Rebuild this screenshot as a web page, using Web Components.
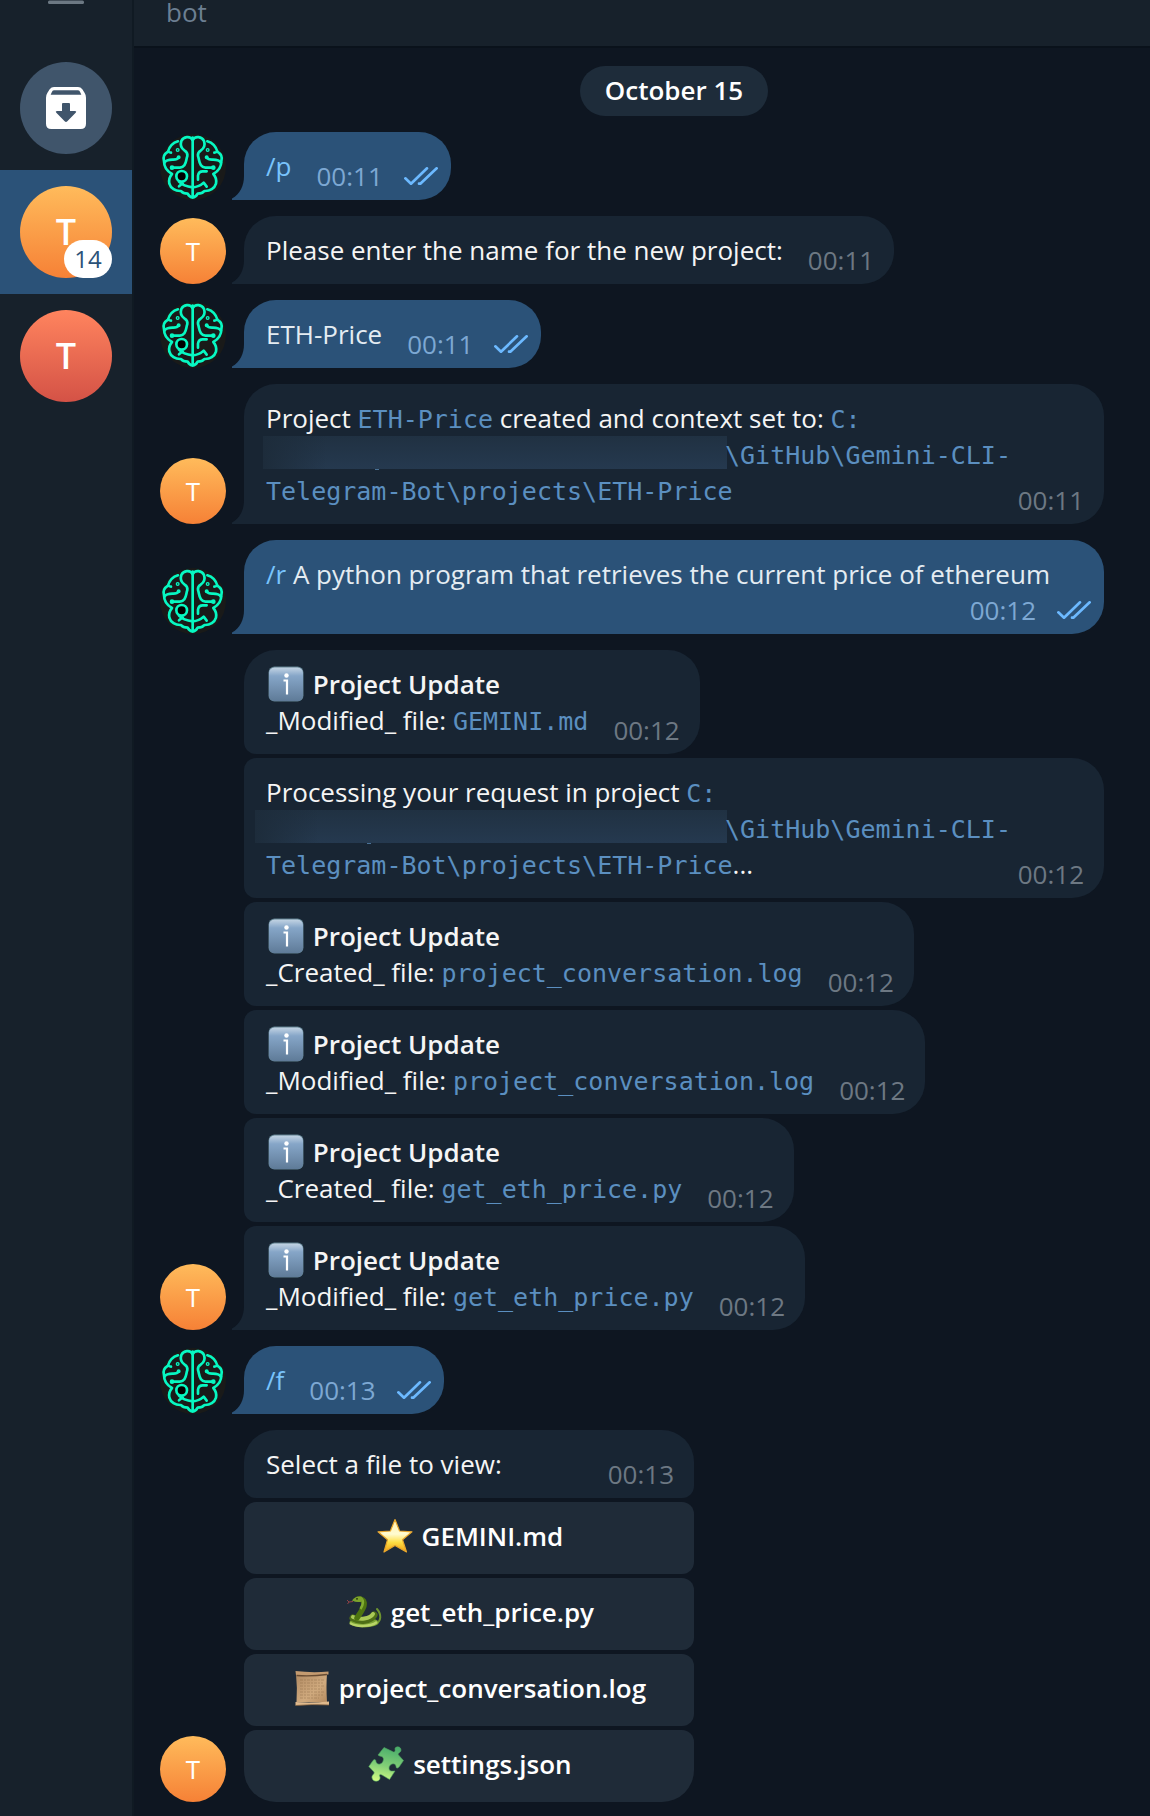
<!DOCTYPE html>
<html lang="en">
<head>
<meta charset="utf-8">
<title>Chat</title>
<style>
  html { background: #0e1621; }
  body { margin: 0; font: 26px/36px "Open Sans", "Noto Sans", sans-serif; color: #f5f5f5; }
  code { font-family: "DejaVu Sans Mono", monospace; font-size: 25px; line-height: 0; color: #5b8fc0; white-space: nowrap; }
  b { font-weight: 600; }
  chat-bubble a { color: #79c4fc; text-decoration: none; }
</style>
</head>
<body>
<app-shell>
  <side-bar slot="side">
    <side-chat label="Archived chats" kind="archive"></side-chat>
    <side-chat label="T" kind="orange" badge="14" selected></side-chat>
    <side-chat label="T" kind="red"></side-chat>
  </side-bar>
  <chat-header slot="head">bot</chat-header>

  <date-pill>October 15</date-pill>

  <message-group who="me">
    <chat-bubble out tail time="00:11"><a href="#p">/p</a></chat-bubble>
  </message-group>
  <message-group who="bot">
    <chat-bubble tail time="00:11">Please enter the name for the new project:</chat-bubble>
  </message-group>
  <message-group who="me">
    <chat-bubble out tail time="00:11">ETH-Price</chat-bubble>
  </message-group>
  <message-group who="bot">
    <chat-bubble tail wide time="00:11">Project <code>ETH-Price</code> created and context set to: <code>C:</code><br><redacted-text></redacted-text><code>\GitHub\Gemini-CLI-</code><br><code>Telegram-Bot\projects\ETH-Price</code></chat-bubble>
  </message-group>
  <message-group who="me">
    <chat-bubble out tail time="00:12"><a href="#r">/r</a> A python program that retrieves the current price of ethereum</chat-bubble>
  </message-group>
  <message-group who="bot">
    <chat-bubble joined-below time="00:12"><emoji-icon name="info"></emoji-icon> <b>Project Update</b><br>_Modified_ file: <code>GEMINI.md</code></chat-bubble>
    <chat-bubble joined-above joined-below wide time="00:12">Processing your request in project <code>C:</code><br><redacted-text long></redacted-text><code>\GitHub\Gemini-CLI-</code><br><code>Telegram-Bot\projects\ETH-Price</code>...</chat-bubble>
    <chat-bubble joined-above joined-below time="00:12"><emoji-icon name="info"></emoji-icon> <b>Project Update</b><br>_Created_ file: <code>project_conversation.log</code></chat-bubble>
    <chat-bubble joined-above joined-below time="00:12"><emoji-icon name="info"></emoji-icon> <b>Project Update</b><br>_Modified_ file: <code>project_conversation.log</code></chat-bubble>
    <chat-bubble joined-above joined-below time="00:12"><emoji-icon name="info"></emoji-icon> <b>Project Update</b><br>_Created_ file: <code>get_eth_price.py</code></chat-bubble>
    <chat-bubble joined-above tail time="00:12"><emoji-icon name="info"></emoji-icon> <b>Project Update</b><br>_Modified_ file: <code>get_eth_price.py</code></chat-bubble>
  </message-group>
  <message-group who="me">
    <chat-bubble out tail time="00:13"><a href="#f">/f</a></chat-bubble>
  </message-group>
  <message-group who="bot">
    <inline-keyboard>
      <chat-bubble slot="message" keyboard time="00:13">Select a file to view:</chat-bubble>
      <key-button icon="star">GEMINI.md</key-button>
      <key-button icon="snake">get_eth_price.py</key-button>
      <key-button icon="scroll">project_conversation.log</key-button>
      <key-button icon="puzzle" last>settings.json</key-button>
    </inline-keyboard>
  </message-group>
</app-shell>

<script>
class Base extends HTMLElement {
  connectedCallback() {
    if (this.shadowRoot) return;
    this.attachShadow({ mode: 'open' }).innerHTML =
      '<style>:host{display:block;box-sizing:border-box}*{box-sizing:border-box}' + this.css() + '</style>' + this.html();
  }
  css() { return ''; }
  html() { return '<slot></slot>'; }
}

const def = (name, cls) => customElements.define(name, cls);

def('app-shell', class extends Base {
  css() { return `
    :host { display: flex; min-height: 100vh; background: #0e1621; }
    main { flex: 1; min-width: 0; border-left: 2px solid #101a23; }
    .list { display: flex; flex-direction: column; gap: 16px; padding: 18px 0 14px 26px; }`; }
  html() { return `<slot name="side"></slot><main><slot name="head"></slot><div class="list"><slot></slot></div></main>`; }
});

def('side-bar', class extends Base {
  css() { return `
    :host { flex: none; width: 132px; background: #17212b; }
    .menu { display: flex; justify-content: center; width: 100%; height: 46px; padding: 0; border: 0; background: none; }`; }
  html() { return `<button class="menu" aria-label="Menu"><svg width="36" height="4"><rect y="0.5" width="36" height="3.5" rx="1.5" fill="#6c7883"/></svg></button><slot></slot>`; }
});

def('side-chat', class extends Base {
  css() { return `
    button { position: relative; display: flex; width: 100%; height: 124px; padding: 16px 20px; border: 0; background: none; font: inherit; }
    :host([selected]) button { background: #2b5278; }
    .badge { position: absolute; right: 20px; bottom: 16px; min-width: 48px; height: 38px; padding: 0 10px; border-radius: 19px; background: #fff; color: #2b5278; font-size: 24px; line-height: 38px; text-align: center; }`; }
  html() {
    const badge = this.getAttribute('badge');
    return `<button aria-label="${this.getAttribute('label')}"><user-avatar size="large" kind="${this.getAttribute('kind')}"></user-avatar>${badge ? `<span class="badge">${badge}</span>` : ''}</button>`;
  }
});

const half = `
  <path d="M128 45C121 32 100 34 94 48C90 60 94 70 104 77C112 82 113 87 112 93C108 104 110 112 103 121Q98 128 90 128H66"/>
  <path d="M84 49C70 53 58 66 54 80C44 86 38 97 42 109C42 125 48 137 66 147C58 156 56 166 58 176C62 190 76 199 93 198C99 206 107 206 113 206C117 214 122 217 128 217"/>
  <path d="M43 113C50 103 60 104 70 104Q82 104 86 97M54 80Q60 83 63 83"/>
  <circle cx="66" cy="128" r="3"/><circle cx="83" cy="75" r="2"/><circle cx="86" cy="97" r="2"/>`;

def('user-avatar', class extends Base {
  css() { return `
    :host { flex: none; }
    .disc { display: flex; align-items: center; justify-content: center; width: 66px; height: 66px; border-radius: 50%; color: #fff; font-weight: 500; }
    :host([size=large]) .disc { width: 92px; height: 92px; font-size: 36px; font-weight: 600; }
    .orange { background: linear-gradient(#ffbb5b, #f68136); }
    .red { background: linear-gradient(#ff845e, #d45246); }
    .archive { background: #40556b; }
    .brain { background: #191a19; }
    svg { display: block; }`; }
  html() {
    const kind = this.getAttribute('kind');
    let inner = 'T';
    if (kind === 'archive') inner = `
      <svg width="40" height="42" viewBox="138 258 120 126" aria-hidden="true"><path fill="#fff" fill-rule="evenodd" d="M162 258H234Q242 258 247 265L254 276Q258 282 258 290V368Q258 384 242 384H154Q138 384 138 368V290Q138 282 142 276L149 265Q154 258 162 258ZM163 268Q158 268 156 272L152 281H244L240 272Q238 268 233 268ZM189 306Q186 306 186 309V330H171Q165 330 169 335L194 361Q198 365 202 361L227 335Q231 330 225 330H210V309Q210 306 207 306Z"/></svg>`;
    if (kind === 'brain') inner = `
      <svg width="66" height="66" viewBox="30 27 198 198" fill="none" stroke="#07f8c2" stroke-width="8" stroke-linecap="round" stroke-linejoin="round" aria-hidden="true">
        ${half}<g transform="matrix(-1 0 0 1 256 0)">${half}</g>
        <path d="M128 38V216M87 170Q100 184 128 187Q148 186 161 173L170 185M87 184L98 175M144 164V152Q146 139 158 139H170"/>
        <circle cx="95" cy="154" r="16" fill="#000"/>
      </svg>`;
    return `<div class="disc ${kind}">${inner}</div>`;
  }
});

def('chat-header', class extends Base {
  css() { return `:host { height: 48px; padding: 0 32px; background: #17212b; border-bottom: 2px solid #0a121b; color: #6c7f92; line-height: 24px; }`; }
});

def('date-pill', class extends Base {
  css() { return `
    :host { display: flex; justify-content: center; padding-left: 38px; }
    span { padding: 6px 25px 8px; border-radius: 25px; background: #1e2c3a; color: #fff; font-weight: 600; }`; }
  html() { return '<span><slot></slot></span>'; }
});

def('message-group', class extends Base {
  css() { return `
    :host { display: flex; align-items: flex-end; gap: 18px; }
    .stack { display: flex; flex: 1; flex-direction: column; align-items: flex-start; gap: 4px; min-width: 0; }`; }
  html() { return `<user-avatar kind="${this.getAttribute('who') === 'me' ? 'brain' : 'orange'}"></user-avatar><div class="stack"><slot></slot></div>`; }
});

def('chat-bubble', class extends Base {
  css() { return `
    :host { --fill: #182533; position: relative; display: flex; flex-wrap: wrap; align-items: flex-end; column-gap: 25px; max-width: 860px; padding: 16px 20px 16px 22px; border-radius: 32px; background: var(--fill); }
    :host([out]) { --fill: #2b5278; padding-right: 13px; color: #e4ecf2; }
    :host([wide]) { display: grid; width: 860px; }
    :host([wide]) .text, :host([wide]) .meta { grid-area: 1 / 1; }
    :host([wide]) .text { white-space: nowrap; }
    :host([joined-above]) { border-top-left-radius: 12px; }
    :host([joined-below]) { border-bottom-left-radius: 12px; }
    :host([tail]) { border-bottom-left-radius: 0; }
    :host([keyboard]) { border-bottom-left-radius: 12px; border-bottom-right-radius: 12px; }
    .meta { display: flex; align-items: center; justify-self: end; gap: 21px; margin: 0 0 -10px auto; color: #6d7883; }
    :host([out]) .meta { color: #7da8d3; }
    .tail { position: absolute; right: 100%; bottom: 0; display: none; fill: var(--fill); }
    :host([tail]) .tail { display: block; }`; }
  html() {
    const ticks = this.hasAttribute('out') ? `<svg width="34" height="18" viewBox="0 0 102 54" fill="none" stroke="#6cb9ff" stroke-width="8" stroke-linecap="round" stroke-linejoin="round" aria-label="Read"><path d="M4 34L21 50L69 4M45 50L49 50L98 4"/></svg>` : '';
    return `<div class="text"><slot></slot></div><div class="meta"><time>${this.getAttribute('time')}</time>${ticks}</div>
      <svg class="tail" width="12" height="24" viewBox="0 0 12 24" aria-hidden="true"><path d="M12 0C12 10 8 18 0 22.500V24H12Z"/></svg>`;
  }
});

def('redacted-text', class extends Base {
  css() { return `
    :host { display: inline-block; vertical-align: top; width: 464px; height: 34px; margin: 0 -2px 0 -3px; background: linear-gradient(#4a7296, #4a7296) 112px 33px / 4px 1px no-repeat, linear-gradient(90deg, #1d2c3b, #1d2c3b00 64px) 0 0 / 100% 33px no-repeat, linear-gradient(#203142, #25394f) 0 0 / 100% 33px no-repeat; }
    :host([long]) { width: 472px; margin-left: -11px; }`; }
  html() { return ''; }
});

const art = {
  info: `<defs><linearGradient id="i" x2="0" y2="1"><stop stop-color="#c3d4e4"/><stop offset=".25" stop-color="#86a6c8"/><stop offset="1" stop-color="#5f7b98"/></linearGradient></defs>
    <rect x=".5" y=".5" width="35" height="35" rx="6" fill="#5f8090"/><rect x="1" y="1.500" width="34" height="33.500" rx="5.500" fill="url(#i)"/>
    <circle cx="18.500" cy="9.500" r="2.200" fill="#fff"/><path d="M15.500 14.500H19V28.500" fill="none" stroke="#fff" stroke-width="2.200"/>`,
  star: `<defs><linearGradient id="s" x2="0" y2="1"><stop offset=".1" stop-color="#fff3b8"/><stop offset=".45" stop-color="#fffbd0"/><stop offset=".7" stop-color="#ffdf45"/><stop offset="1" stop-color="#f0a012"/></linearGradient></defs>
    <path d="M18 1.500L22.600 13L35 13.800L25.500 21.700L29.500 34L18 27.500L7 34L10.500 21.700L1 13.800L13.400 13Z" fill="url(#s)" stroke="#e8a62c" stroke-width="1.200" stroke-linejoin="round"/>`,
  snake: `<path d="M7 7.500L3 8L1 6M3 8L1.500 10" stroke="#8d4247" fill="none"/>
    <path d="M31 15C36 21 35 27 30 30" stroke="#6d9430" stroke-width="2" fill="none" stroke-linecap="round"/>
    <ellipse cx="18" cy="28.500" rx="14.500" ry="5" fill="#7ba334"/><path d="M4 29C10 33 25 33 31 28" stroke="#b9d468" stroke-width="2.500" fill="none"/>
    <path d="M7 24C14 28 24 27 28 21" stroke="#4d6e16" stroke-width="7" fill="none" stroke-linecap="round"/><path d="M7 23C14 26 24 25 27 20" stroke="#a9c957" stroke-width="4" fill="none" stroke-linecap="round"/>
    <path d="M12 5C20 5 19 11 16 16C14 20 12 22 11 24" stroke="#4d7410" stroke-width="5.500" fill="none" stroke-linecap="round"/><path d="M13 4C19 5 17 11 14.500 15" stroke="#82ac31" stroke-width="2.500" fill="none"/>
    <path d="M6 6.500Q9 2 15 2.500Q18 4 16 7.500Q11 9 6 6.500Z" fill="#7ca32c"/><circle cx="11" cy="4.800" r=".9" fill="#20310b"/>`,
  scroll: `<defs><linearGradient id="p" x2="1" y2="1"><stop stop-color="#b08a63"/><stop offset=".6" stop-color="#d0aa7e"/><stop offset="1" stop-color="#b48b60"/></linearGradient></defs>
    <path d="M2 4H33Q32 16 33 32H2.500Q3.500 18 2 4Z" fill="url(#p)"/><path d="M1.500 1Q18 3 34.500 1.500V4.500Q20 5 2 5.500Z" fill="#c49b70"/><path d="M2.500 5.500Q18 6.500 33 4.500" stroke="#694c32" stroke-width="1.300" fill="none"/>
    <path d="M1.500 32Q18 33 35 31.500V35Q18 34.500 1.500 35.500Z" fill="#dfb98c"/><path d="M1.500 35.500Q18 34 35 35" stroke="#805f3f" stroke-width=".8" fill="none"/>
    <path d="M6 10H30M6 13H29M6 16H30M6 19H28M6 22H30M6 25H29M6 28H25" stroke="#80603e" stroke-width=".8" stroke-dasharray="3 1 2 1" opacity=".45"/>`,
  puzzle: `<defs><linearGradient id="z" x1=".6" x2=".4" y2="1"><stop stop-color="#49ad6b"/><stop offset=".55" stop-color="#82cf77"/><stop offset="1" stop-color="#d1fb83"/></linearGradient></defs>
    <path d="M16 1.500L24.500 5.500C27 7 27.500 5 27 3C27 0 33 0 33 4C33 7 29 7 30.500 9L35.500 14.500L31 21C29 23 28 22 28 20C27 16 21 18 21 22C21 26 25 25 27 25L21.500 33.500L14 29C11.500 27.500 11 29 12 31C13 36 5 37 4 32C3 29 7 28 6 26L.8 20.500L5 14.500C7 12.500 8 14 8 16C10 20 15 18 15.500 13.500C15.500 9.500 12 11 10 9Z" fill="url(#z)" stroke="#4fa562" stroke-width=".6" stroke-linejoin="round"/>`
};

def('emoji-icon', class extends Base {
  css() { return `:host { display: inline-block; vertical-align: top; height: 36px; padding: 0 2px; } svg { display: block; }`; }
  html() { return `<svg width="36" height="36" viewBox="0 0 36 36" aria-hidden="true">${art[this.getAttribute('name')]}</svg>`; }
});

def('inline-keyboard', class extends Base {
  css() { return `:host { display: flex; flex-direction: column; gap: 4px; width: 450px; }`; }
  html() { return `<slot name="message"></slot><slot></slot>`; }
});

def('key-button', class extends Base {
  css() { return `
    button { display: block; width: 100%; height: 72px; padding: 16px 20px 20px; border: 0; border-radius: 12px; background: #1f2b38; color: #fff; font: inherit; font-weight: 600; white-space: nowrap; }
    :host([last]) button { border-radius: 12px 12px 32px 32px; }`; }
  html() { return `<button><emoji-icon name="${this.getAttribute('icon')}"></emoji-icon> <slot></slot></button>`; }
});
</script>
</body>
</html>
